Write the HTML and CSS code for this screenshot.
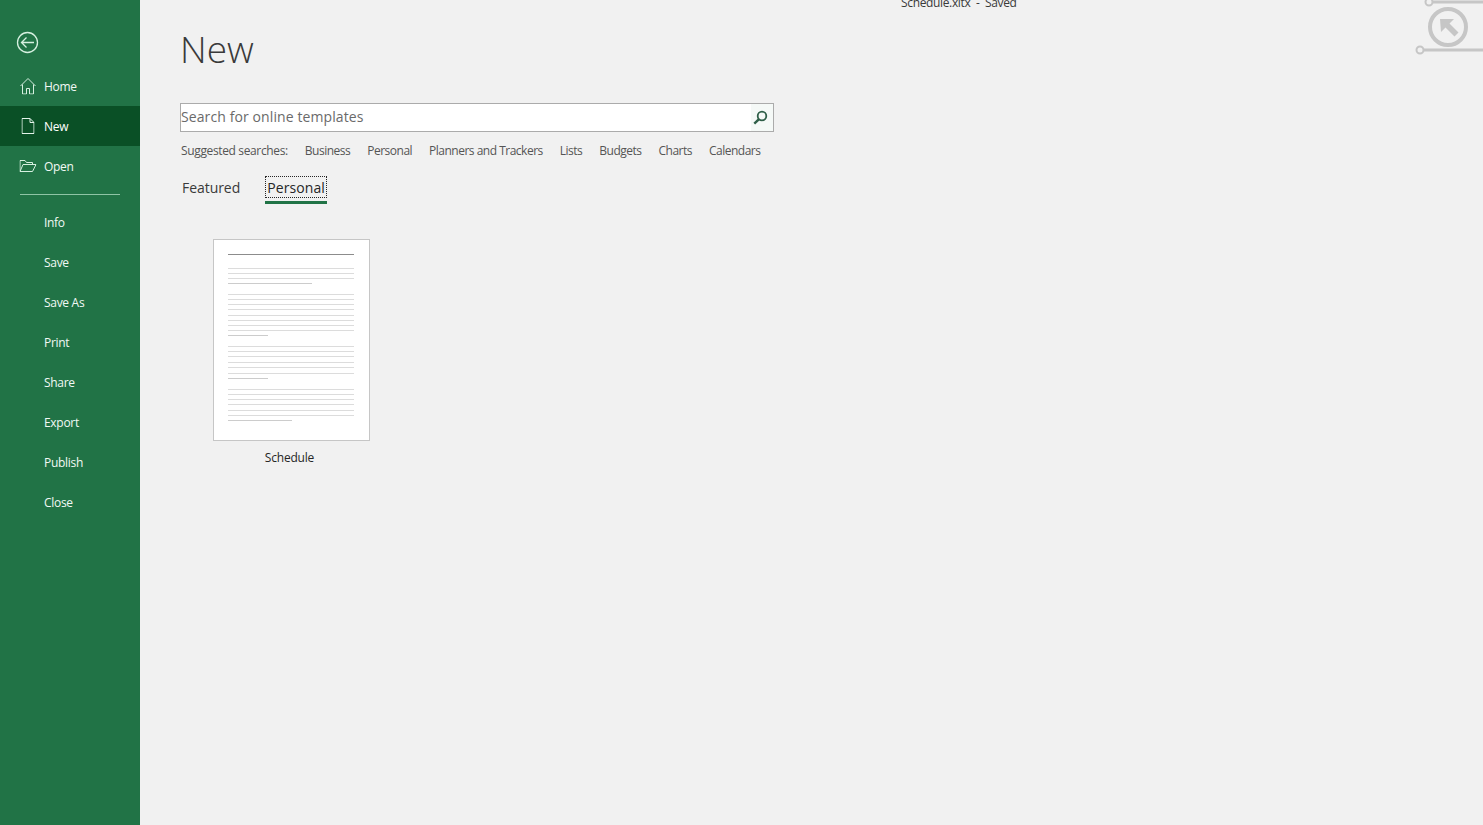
FILE: index.html
```html
<!DOCTYPE html>
<html lang="en">
<head>
  <meta charset="UTF-8">
  <title>Schedule.xltx - Saved</title>
  <link rel="stylesheet" href="styles.css">
</head>
<body>
  <!-- Backstage nav -->
  <aside class="sidebar">
    <button class="back-button" aria-label="Back">
      <svg width="24" height="24" viewBox="0 0 24 24" fill="none" stroke="#d6f0e0" stroke-width="1.3">
        <circle cx="11.500" cy="12.500" r="10"/>
        <path d="M18 12.500H5.500M10.500 7.500l-5 5 5 5"/>
      </svg>
    </button>
    <nav class="nav-group">
      <a class="nav-item">
        <svg class="nav-icon" width="16" height="17" viewBox="0 0 16 17" fill="none" stroke="#d6f0e0">
          <path d="M.5 8.5 8 1l7.500 7.500M2.500 7v9.500h4V11h3v5.500h4V7"/>
        </svg>
        Home
      </a>
      <a class="nav-item active">
        <svg class="nav-icon" width="13" height="16" viewBox="0 0 13 16" fill="none" stroke="#e4f4ea">
          <path d="M.5.500h8l4 4v11H.5zM8.500.500v4h4"/>
        </svg>
        New
      </a>
      <a class="nav-item">
        <svg class="nav-icon" width="17" height="12" viewBox="0 0 17 12" fill="none" stroke="#d6f0e0">
          <path d="M.5 11.500V.500h5l1.500 2h6v2M.5 11.500h12.500l3.500-7H3.500z"/>
        </svg>
        Open
      </a>
    </nav>
    <hr class="nav-divider">
    <nav class="nav-group">
      <a class="nav-item">Info</a>
      <a class="nav-item">Save</a>
      <a class="nav-item">Save As</a>
      <a class="nav-item">Print</a>
      <a class="nav-item">Share</a>
      <a class="nav-item">Export</a>
      <a class="nav-item">Publish</a>
      <a class="nav-item">Close</a>
    </nav>
  </aside>

  <main class="content">
    <h1 class="page-title">New</h1>

    <div class="search-box">
      <span class="search-placeholder">Search for online templates</span>
      <span class="search-button">
        <svg width="15" height="15" viewBox="0 0 15 15" fill="none" stroke="#2f5f48" stroke-width="1.800">
          <circle cx="9" cy="6" r="4.300"/>
          <path d="M6 9.200 1.300 13.700" stroke-width="2.400"/>
        </svg>
      </span>
    </div>

    <div class="suggested">
      <span class="suggested-label">Suggested searches:</span>
      <a>Business</a>
      <a>Personal</a>
      <a>Planners and Trackers</a>
      <a>Lists</a>
      <a>Budgets</a>
      <a>Charts</a>
      <a>Calendars</a>
    </div>

    <div class="tabs">
      <a class="tab">Featured</a>
      <a class="tab selected"><span class="tab-focus">Personal</span></a>
    </div>

    <figure class="template">
      <div class="thumb">
        <svg width="155" height="200" viewBox="1 1 155 200" stroke="#dcdcdc" stroke-width="1" shape-rendering="crispEdges">
          <path stroke="#8c8c8c" d="M15 15.500h126"/>
          <path d="M15 29.500h126M15 34.500h126M15 39.500h126"/>
          <path stroke="#cccccc" d="M15 44.500h84"/>
          <path d="M15 55.500h126M15 60.500h126M15 65.500h126M15 70.500h126M15 76.500h126M15 81.500h126M15 86.500h126M15 91.500h126"/>
          <path stroke="#cccccc" d="M15 96.500h40"/>
          <path d="M15 107.500h126M15 112.500h126M15 117.500h126M15 123.500h126M15 128.500h126M15 134.500h126"/>
          <path stroke="#cccccc" d="M15 139.500h40"/>
          <path d="M15 150.500h126M15 155.500h126M15 160.500h126M15 165.500h126M15 171.500h126M15 176.500h126"/>
          <path stroke="#cccccc" d="M15 181.500h64"/>
        </svg>
      </div>
      <figcaption class="template-name">Schedule</figcaption>
    </figure>
  </main>

  <div class="doc-title">Schedule.xltx&nbsp; - &nbsp;Saved</div>

  <!-- Ribbon decoration, top right -->
  <svg class="corner-art" width="68" height="58" viewBox="0 0 68 58" fill="none" stroke="#c6c6c6">
    <circle cx="14" cy="2" r="3.500" stroke-width="2"/>
    <path d="M18 2h50" stroke-width="3"/>
    <circle cx="5" cy="50" r="3.500" stroke-width="2"/>
    <path d="M9 50h59" stroke-width="3"/>
    <circle cx="33" cy="27" r="18" stroke-width="4"/>
    <path d="M25 19h14l-4.500 4.500 9 9-4 4-9-9L26 32z" fill="#c6c6c6" stroke="none"/>
  </svg>
</body>
</html>
```

FILE: styles.css
```css
html, body {
  height: 100%;
}

body {
  margin: 0;
  display: flex;
  overflow: hidden;
  background: #f1f1f1;
  color: #262626;
  font-family: "Open Sans", "Noto Sans", sans-serif;
}

.sidebar {
  width: 140px;
  flex-shrink: 0;
  background: #217346;
  padding-top: 30px;
  box-sizing: border-box;
}

.back-button {
  display: block;
  width: 24px;
  height: 24px;
  margin: 0 0 12px 16px;
  padding: 0;
  border: 0;
  background: none;
}

.nav-group {
  display: flex;
  flex-direction: column;
}

.nav-item {
  position: relative;
  display: flex;
  align-items: center;
  height: 40px;
  padding-left: 44px;
  font-size: 12px;
  letter-spacing: -0.3px;
  color: #f2f9f5;
}

.nav-item.active {
  background: #0a5026;
  color: #fff;
}

/* icons hang in the left gutter of the row */
.nav-icon {
  position: absolute;
  left: 28px;
  top: 50%;
  transform: translate(-50%, -50%);
}

.nav-divider {
  width: 100px;
  height: 1px;
  margin: 8px 20px 7px;
  border: 0;
  background: #8fc4a5;
}

.content {
  flex: 1;
  padding: 26px 0 0 40px;
}

.page-title {
  margin: 0 0 26px;
  height: 51px;
  font-size: 37px;
  line-height: 46px;
  font-weight: 300;
  color: #3a3a3a;
}

.search-box {
  display: flex;
  align-items: center;
  justify-content: space-between;
  width: 594px;
  height: 29px;
  box-sizing: border-box;
  border: 1px solid #ababab;
  background: #fff;
}

.search-placeholder {
  padding-bottom: 2px;
  font-size: 14px;
  letter-spacing: 0.1px;
  color: #6a6a6a;
}

.search-button {
  display: flex;
  align-items: center;
  justify-content: center;
  width: 22px;
  height: 27px;
  background: #f5f9f7;
}

.search-button svg {
  margin-right: 3px;
}

.suggested {
  display: flex;
  gap: 17px;
  margin: 10px 0 0 1px;
  font-size: 12px;
  line-height: 17px;
  letter-spacing: -0.5px;
  color: #555;
}

.suggested-label {
  letter-spacing: -0.36px;
}

.tabs {
  display: flex;
  gap: 24px;
  margin: 19px 0 0 1px;
}

.tab {
  height: 28px;
  padding: 0 1px;
  font-size: 14px;
  line-height: 20px;
  letter-spacing: -0.05px;
  color: #3a3a3a;
}

.tab.selected {
  height: 23px;
  padding: 0;
  border-bottom: 3px solid #217346;
  letter-spacing: 0.1px;
  color: #262626;
}

.tab-focus {
  display: block;
  margin-top: -2px;
  padding: 2px 2px 0;
  outline: 1px dotted #262626;
  outline-offset: -1px;
}

.template {
  width: 157px;
  margin: 33px 0 0 33px;
}

.thumb {
  width: 155px;
  height: 200px;
  border: 1px solid #c6c6c6;
  background: #fff;
}

.thumb svg {
  display: block;
}

.template-name {
  margin-top: 9px;
  padding-right: 4px;
  text-align: center;
  font-size: 12px;
  line-height: 16px;
  letter-spacing: -0.2px;
  color: #262626;
}

.doc-title {
  position: absolute;
  top: -5px;
  left: 901px;
  font-size: 12px;
  line-height: 16px;
  letter-spacing: -0.35px;
  color: #3a3a3a;
}

.corner-art {
  position: absolute;
  top: 0;
  right: 0;
}
```
